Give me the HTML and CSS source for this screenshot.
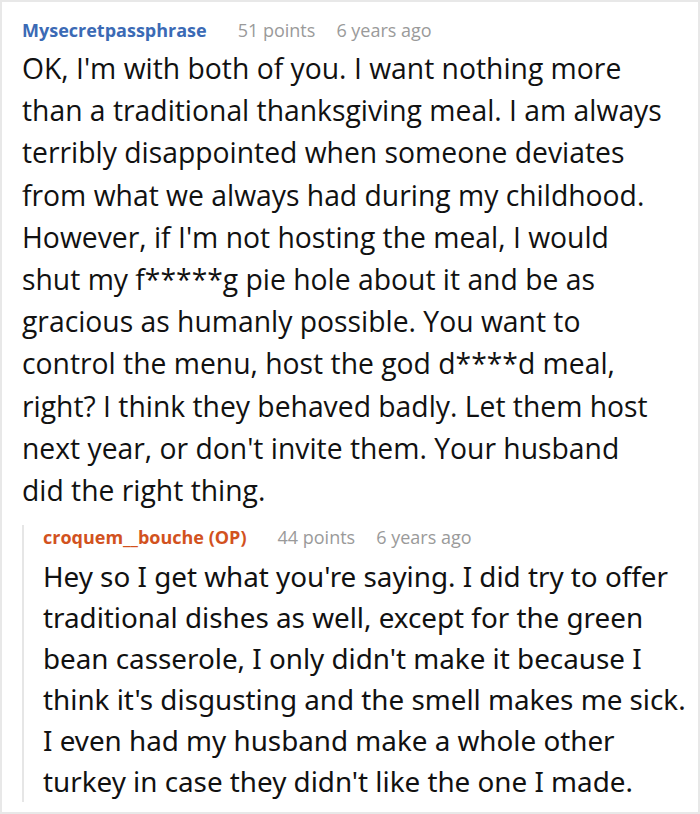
FILE: index.html
```html
<!DOCTYPE html>
<html>
<head>
<meta charset="utf-8">
<link rel="stylesheet" href="styles.css">
</head>
<body>
<div class="frame">
  <div class="comment">
    <div class="meta">
      <span class="author">Mysecretpassphrase</span>
      <span class="points">51 points</span>
      <span class="age">6 years ago</span>
    </div>
    <p class="text">OK, I'm with both of you. I want nothing more<br>than a traditional thanksgiving meal. I am always<br>terribly disappointed when someone deviates<br>from what we always had during my childhood.<br>However, if I'm not hosting the meal, I would<br>shut my f*****g pie hole about it and be as<br>gracious as humanly possible. You want to<br>control the menu, host the god d****d meal,<br>right? I think they behaved badly. Let them host<br>next year, or don't invite them. Your husband<br>did the right thing.</p>
    <div class="reply">
      <div class="meta">
        <span class="author op">croquem__bouche (OP)</span>
        <span class="points">44 points</span>
        <span class="age">6 years ago</span>
      </div>
      <p class="text">Hey so I get what you're saying. I did try to offer<br>traditional dishes as well, except for the green<br>bean casserole, I only didn't make it because I<br>think it's disgusting and the smell makes me sick.<br>I even had my husband make a whole other<br>turkey in case they didn't like the one I made.</p>
    </div>
  </div>
</div>
</body>
</html>
```
FILE: styles.css
```css
html, body {
  margin: 0;
  padding: 0;
  background: #ffffff;
}
body {
  font-family: "Open Sans", "Noto Sans", sans-serif;
  color: #111111;
}
.frame {
  width: 700px;
  height: 814px;
  box-sizing: border-box;
  border: 2px solid #e8e8e8;
  overflow: hidden;
}
.comment {
  padding: 16px 0 0 20px;
}
.meta {
  display: flex;
  align-items: baseline;
  font-family: "Open Sans", sans-serif;
  font-size: 18px;
  line-height: 24px;
  color: #9a9a9a;
  white-space: nowrap;
}
.author {
  font-weight: 700;
  color: #3b6ab5;
  margin-right: 31px;
}
.author.op {
  color: #d2521e;
}
.points {
  margin-right: 21px;
}
.text {
  margin: 5px 0 0 0;
  font-family: "Open Sans", sans-serif;
  font-size: 28.3px;
  line-height: 42.2px;
  color: #111111;
  white-space: nowrap;
}
.reply {
  margin-top: 25px;
  border-left: 2px solid #e6e6e6;
  padding-left: 19px;
}
.reply .meta {
  margin-top: -11px;
}
.reply .text {
  font-family: "Noto Sans", sans-serif;
  font-size: 27.8px;
  line-height: 41px;
  margin: 7px 0 -8px 0;
}
```
